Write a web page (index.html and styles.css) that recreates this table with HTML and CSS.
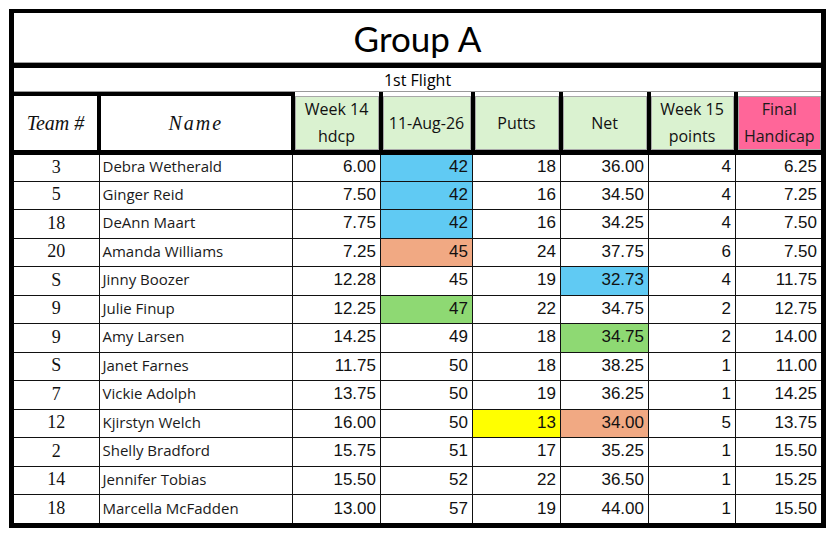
FILE: index.html
```html
<!DOCTYPE html>
<html>
<head>
<meta charset="utf-8">
<title>Group A</title>
<link rel="stylesheet" href="styles.css">
</head>
<body>
<div class="sheet">
  <div class="title">Group A</div>
  <div class="flight">1st Flight</div>
  <table class="grid">
    <colgroup>
      <col class="c-team"><col class="c-name"><col class="c-w14"><col class="c-aug">
      <col class="c-putts"><col class="c-net"><col class="c-w15"><col class="c-final">
    </colgroup>
    <thead>
      <tr class="head">
        <th class="script first">Team #</th>
        <th class="script name-h">Name</th>
        <th class="green">Week 14<br>hdcp</th>
        <th class="green">11-Aug-26</th>
        <th class="green">Putts</th>
        <th class="green">Net</th>
        <th class="green">Week 15<br>points</th>
        <th class="pink last">Final<br>Handicap</th>
      </tr>
    </thead>
    <tbody>
      <tr><td class="team">3</td><td class="name">Debra Wetherald</td><td>6.00</td><td class="blue">42</td><td>18</td><td>36.00</td><td>4</td><td class="last">6.25</td></tr>
      <tr><td class="team">5</td><td class="name">Ginger Reid</td><td>7.50</td><td class="blue">42</td><td>16</td><td>34.50</td><td>4</td><td class="last">7.25</td></tr>
      <tr><td class="team">18</td><td class="name">DeAnn Maart</td><td>7.75</td><td class="blue">42</td><td>16</td><td>34.25</td><td>4</td><td class="last">7.50</td></tr>
      <tr><td class="team">20</td><td class="name">Amanda Williams</td><td>7.25</td><td class="salmon">45</td><td>24</td><td>37.75</td><td>6</td><td class="last">7.50</td></tr>
      <tr><td class="team">S</td><td class="name">Jinny Boozer</td><td>12.28</td><td>45</td><td>19</td><td class="blue">32.73</td><td>4</td><td class="last">11.75</td></tr>
      <tr><td class="team">9</td><td class="name">Julie Finup</td><td>12.25</td><td class="lime">47</td><td>22</td><td>34.75</td><td>2</td><td class="last">12.75</td></tr>
      <tr><td class="team">9</td><td class="name">Amy Larsen</td><td>14.25</td><td>49</td><td>18</td><td class="lime">34.75</td><td>2</td><td class="last">14.00</td></tr>
      <tr><td class="team">S</td><td class="name">Janet Farnes</td><td>11.75</td><td>50</td><td>18</td><td>38.25</td><td>1</td><td class="last">11.00</td></tr>
      <tr><td class="team">7</td><td class="name">Vickie Adolph</td><td>13.75</td><td>50</td><td>19</td><td>36.25</td><td>1</td><td class="last">14.25</td></tr>
      <tr><td class="team">12</td><td class="name">Kjirstyn Welch</td><td>16.00</td><td>50</td><td class="yellow">13</td><td class="salmon">34.00</td><td>5</td><td class="last">13.75</td></tr>
      <tr><td class="team">2</td><td class="name">Shelly Bradford</td><td>15.75</td><td>51</td><td>17</td><td>35.25</td><td>1</td><td class="last">15.50</td></tr>
      <tr><td class="team">14</td><td class="name">Jennifer Tobias</td><td>15.50</td><td>52</td><td>22</td><td>36.50</td><td>1</td><td class="last">15.25</td></tr>
      <tr class="final-row"><td class="team">18</td><td class="name">Marcella McFadden</td><td>13.00</td><td>57</td><td>19</td><td>44.00</td><td>1</td><td class="last">15.50</td></tr>
    </tbody>
  </table>
</div>
</body>
</html>
```
FILE: styles.css
```css
html, body {
  margin: 0;
  padding: 0;
  background: #fff;
}

.sheet {
  margin: 9px 0 0 9px;
  width: 807px;
  border: 5px solid #000;
  border-top-width: 4px;
  background: #fff;
}

.title {
  height: 50px;
  border-bottom: 5px solid #000;
  box-shadow: inset 0 -1px 0 #a0a0a0;
  display: flex;
  align-items: center;
  justify-content: center;
  font-family: "Lato", "Open Sans", sans-serif;
  font-size: 35px;
  color: #000;
}

.flight {
  height: 24px;
  box-shadow: inset 0 -1px 0 #9a9a9a;
  display: flex;
  align-items: center;
  justify-content: center;
  font-family: "Open Sans", sans-serif;
  font-size: 16px;
  color: #000;
}

.grid {
  width: 807px;
  table-layout: fixed;
  border-collapse: collapse;
  border-spacing: 0;
}

.c-team { width: 85px; }
.c-name { width: 193.5px; }
.c-w14 { width: 88px; }
.c-aug { width: 92px; }
.c-putts { width: 88px; }
.c-net { width: 88px; }
.c-w15 { width: 87px; }
.c-final { width: 85.5px; }

.head th {
  height: 51px;
  padding: 0;
  border-left: 4px solid #000;
  border-right: 4px solid #000;
  border-bottom: 5px solid #000;
  font-weight: normal;
  font-family: "Open Sans", sans-serif;
  font-size: 16px;
  line-height: 27px;
  color: #111;
  text-align: center;
  vertical-align: middle;
}

.head th.first { border-left: none; }
.head th.last { border-right: none; }

.head th.script {
  border-top: 4px solid #000;
  font-family: "Liberation Serif", serif;
  font-style: italic;
  font-size: 20px;
}

.head th.name-h { letter-spacing: 2px; }

.head th.green {
  border-top: 4px solid #fff;
  background: #daf2d0;
  box-shadow: inset 0 0 0 1px #a8a8a8;
}

.head th.pink {
  border-top: 4px solid #fff;
  background: #ff6699;
  color: #1a1a1a;
  box-shadow: inset 0 0 0 1px #a8a8a8;
}

tbody tr { height: 28.5px; }

tbody td {
  padding: 0 4px 1px 0;
  border: 1px solid #111;
  font-family: "Liberation Sans", Arial, sans-serif;
  font-size: 17px;
  color: #111;
  text-align: right;
  vertical-align: middle;
  white-space: nowrap;
}

tbody td.team {
  border-left: none;
  padding: 0 0 1px 0;
  text-align: center;
  font-family: "Liberation Serif", serif;
  font-size: 18px;
}

tbody td.name {
  padding: 0 0 3px 3px;
  text-align: left;
  font-family: "Open Sans", sans-serif;
  font-size: 15px;
  color: #1a1a1a;
}

tbody td.last { border-right: none; }
tbody tr.final-row td { border-bottom: none; }

.blue { background: #60caf3; }
.salmon { background: #f1a983; }
.lime { background: #8ed973; }
.yellow { background: #ffff00; }
```
